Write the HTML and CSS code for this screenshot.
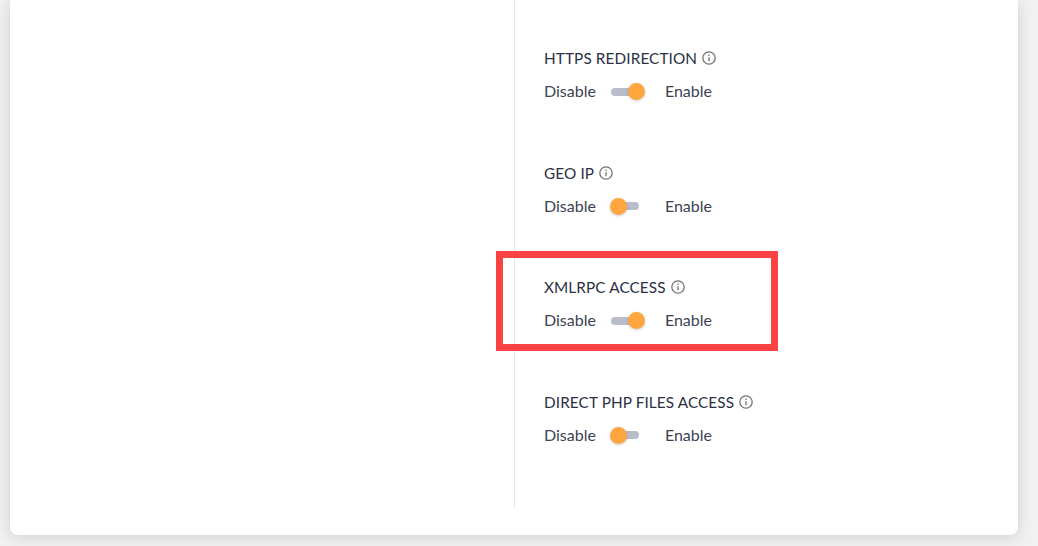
FILE: index.html
```html
<!DOCTYPE html>
<html lang="en">

<head>
    <meta charset="UTF-8">
    <title>Security Settings</title>
    <link rel="stylesheet" href="styles.css">
</head>

<body>
    <div class="card">
        <div class="left-column"></div>
        <div class="right-column">
            <div class="setting">
                <div class="setting-label">HTTPS REDIRECTION
                    <svg class="info" viewBox="0 0 14 14"><circle cx="7" cy="7" r="6.2"/><path d="M7 6.2v4M7 3.6v1.3"/></svg>
                </div>
                <div class="toggle-row">
                    <span class="state">Disable</span>
                    <span class="toggle on"><span class="knob"></span></span>
                    <span class="state">Enable</span>
                </div>
            </div>
            <div class="setting">
                <div class="setting-label">GEO IP
                    <svg class="info" viewBox="0 0 14 14"><circle cx="7" cy="7" r="6.2"/><path d="M7 6.2v4M7 3.6v1.3"/></svg>
                </div>
                <div class="toggle-row">
                    <span class="state">Disable</span>
                    <span class="toggle"><span class="knob"></span></span>
                    <span class="state">Enable</span>
                </div>
            </div>
            <div class="setting">
                <div class="setting-label">XMLRPC ACCESS
                    <svg class="info" viewBox="0 0 14 14"><circle cx="7" cy="7" r="6.2"/><path d="M7 6.2v4M7 3.6v1.3"/></svg>
                </div>
                <div class="toggle-row">
                    <span class="state">Disable</span>
                    <span class="toggle on"><span class="knob"></span></span>
                    <span class="state">Enable</span>
                </div>
                <div class="red-box"></div>
            </div>
            <div class="setting">
                <div class="setting-label">DIRECT PHP FILES ACCESS
                    <svg class="info" viewBox="0 0 14 14"><circle cx="7" cy="7" r="6.2"/><path d="M7 6.2v4M7 3.6v1.3"/></svg>
                </div>
                <div class="toggle-row">
                    <span class="state">Disable</span>
                    <span class="toggle"><span class="knob"></span></span>
                    <span class="state">Enable</span>
                </div>
            </div>
        </div>
    </div>
</body>

</html>
```
FILE: styles.css
```css
html,
body {
    height: 100%;
}

body {
    margin: 0;
    background-color: #f1f1f1;
    font-family: Lato, "Open Sans", Arial, sans-serif;
    color: #3b4254;
    overflow: hidden;
}

.card {
    display: flex;
    height: 535px;
    margin: 0 20px 0 10px;
    background-color: #fff;
    border-radius: 0 0 8px 8px;
    box-shadow: 0 2px 16px rgba(0, 0, 0, 0.14);
}

.left-column {
    width: 504px;
}

.right-column {
    height: 508px;
    padding-left: 29px;
    border-left: 1px solid #e8e8e8;
}

.setting {
    position: relative;
    height: 114.5px;
    box-sizing: border-box;
    padding-top: 49px;
}

.setting-label {
    display: flex;
    align-items: center;
    gap: 5px;
    height: 18px;
    font-size: 15.3px;
    letter-spacing: 0.12px;
    color: #2b3044;
}

.info {
    width: 14px;
    height: 14px;
    fill: none;
    stroke: #77716d;
    stroke-width: 1.3;
}

.toggle-row {
    display: flex;
    align-items: center;
    height: 20px;
    margin-top: 14.5px;
    font-size: 16px;
}

.state {
    margin-bottom: 2px;
}

.toggle {
    position: relative;
    width: 28px;
    height: 8px;
    margin: 0 26px 0 15px;
    background-color: #b9bdcb;
    border-radius: 4px;
}

.knob {
    position: absolute;
    top: -4.5px;
    left: -1px;
    width: 17px;
    height: 17px;
    background-color: #ffa63e;
    border-radius: 50%;
    box-shadow: 0 1px 3px rgba(0, 0, 0, 0.2);
}

.toggle.on .knob {
    left: auto;
    right: -6px;
}

.red-box {
    position: absolute;
    left: -48px;
    top: 22px;
    width: 282px;
    height: 100px;
    box-sizing: border-box;
    border: 7px solid #fb4242;
}
```
